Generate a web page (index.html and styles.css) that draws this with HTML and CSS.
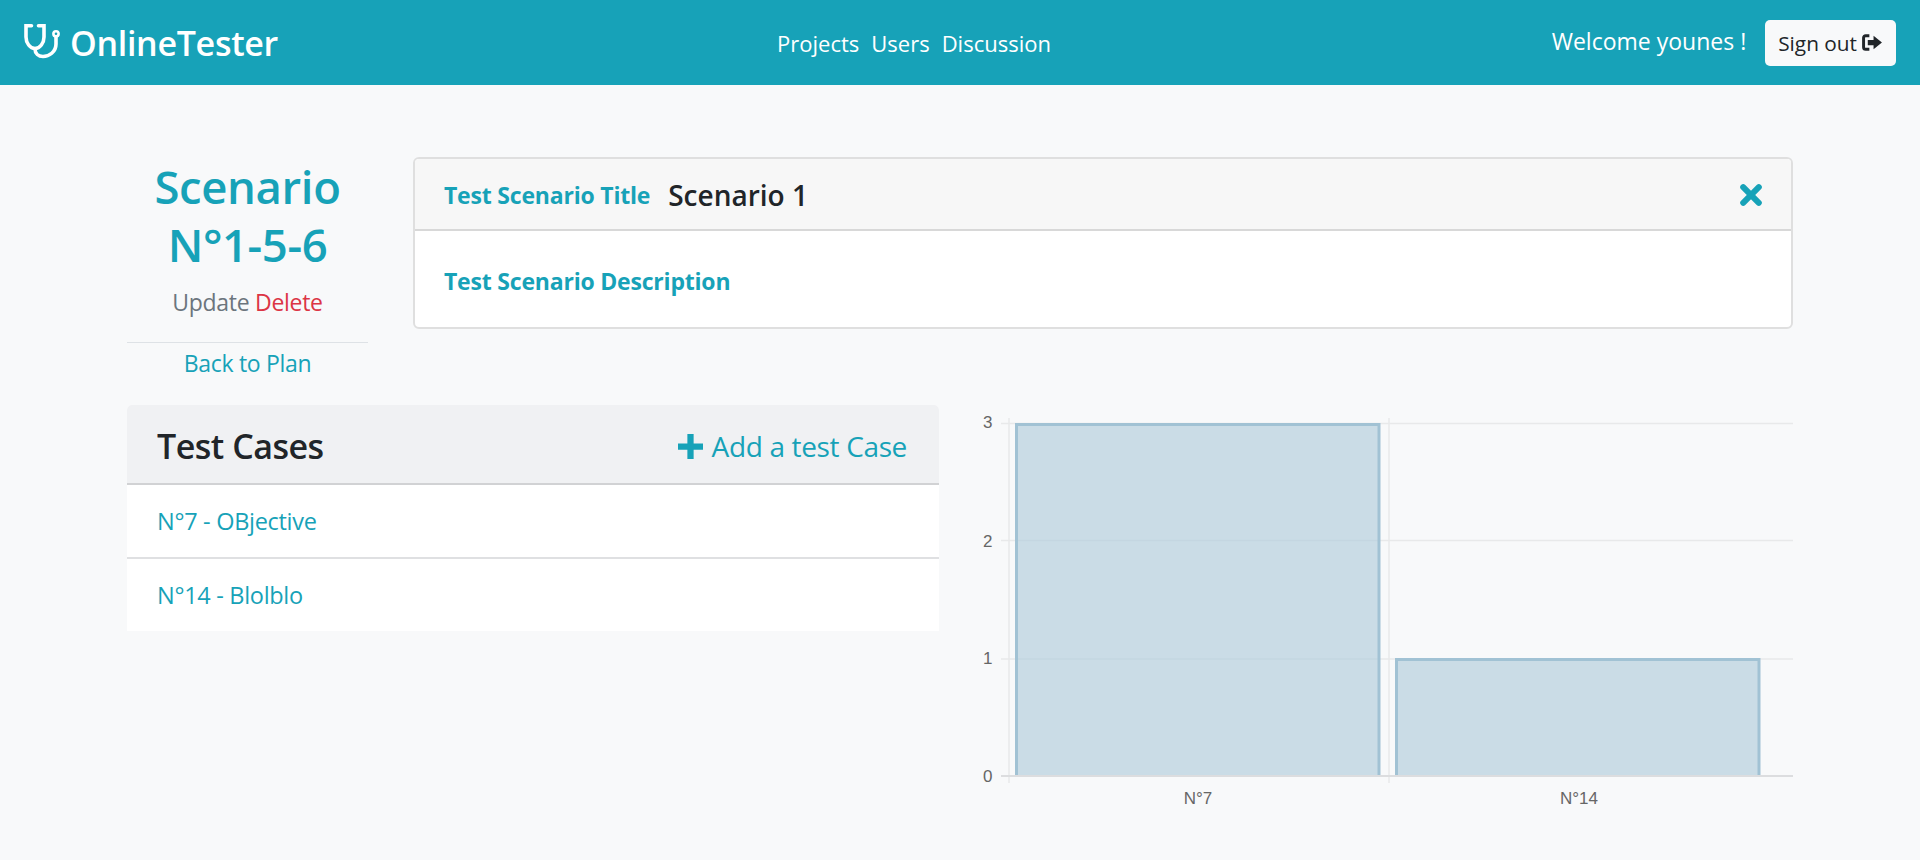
FILE: index.html
```html
<!DOCTYPE html>
<html lang="en">
<head>
    <meta charset="UTF-8">
    <title>OnlineTester</title>
    <link rel="stylesheet" href="styles.css">
</head>
<body>
    <header class="topbar">
        <a class="brand" href="#">
            <svg class="brand-icon" viewBox="0 0 38 38" fill="none" stroke="#fff" stroke-width="3.6" stroke-linecap="round">
                <path d="M7.5 1.8H2V13C2 19 6 24.5 11 24.5C16 24.5 20 19 20 13V1.8H14.5"/>
                <path d="M11 24.5V25C11 29.5 14.5 32.5 19 32.5C25 32.5 32 28 32 20V13.5"/>
                <circle cx="32" cy="9.8" r="2.6" stroke-width="2.6"/>
            </svg>
            OnlineTester
        </a>
        <nav class="nav-links">
            <a href="#">Projects</a>
            <a href="#">Users</a>
            <a href="#">Discussion</a>
        </nav>
        <div class="user-box">
            <span class="welcome">Welcome younes !</span>
            <button class="sign-out">Sign out
                <svg class="sign-icon" viewBox="0 0 20 16">
                    <path d="M7 1.5H3.5C2.3 1.5 1.5 2.3 1.5 3.5V12.5C1.5 13.7 2.3 14.5 3.5 14.5H7" fill="none" stroke="#212529" stroke-width="2.8"/>
                    <path d="M5.5 5.5H11V1.5L19 8L11 14.5V10.5H5.5Z" fill="#212529"/>
                </svg>
            </button>
        </div>
    </header>

    <main class="page">
        <section class="top-row">
            <div class="scenario-side">
                <h1>Scenario N°1-5-6</h1>
                <p class="actions"><a class="update" href="#">Update</a> <a class="delete" href="#">Delete</a></p>
                <a class="back" href="#">Back to Plan</a>
            </div>
            <div class="scenario-card">
                <div class="card-head">
                    <span class="card-label">Test Scenario Title</span>
                    <span class="card-title">Scenario 1</span>
                    <svg class="close-icon" viewBox="0 0 20 20" stroke="#17a2b8" stroke-width="5" stroke-linecap="round">
                        <path d="M3.5 3.5L16.5 16.5M16.5 3.5L3.5 16.5"/>
                    </svg>
                </div>
                <div class="card-body">
                    <span class="card-label">Test Scenario Description</span>
                </div>
            </div>
        </section>

        <section class="bottom-row">
            <div class="cases">
                <div class="cases-head">
                    <h2>Test Cases</h2>
                    <a class="add-case" href="#">
                        <svg class="plus-icon" viewBox="0 0 16 16" fill="#17a2b8">
                            <path d="M6 0H10V6H16V10H10V16H6V10H0V6H6Z"/>
                        </svg>
                        Add a test Case
                    </a>
                </div>
                <a class="case-row" href="#">N°7 - OBjective</a>
                <a class="case-row" href="#">N°14 - Blolblo</a>
            </div>
            <svg class="chart" viewBox="0 0 834 410">
                <!-- grid -->
                <g stroke="#e8e9ea" stroke-width="1.5">
                    <path d="M42 18.5H834M42 135.5H834M42 254H834"/>
                    <path d="M50 13V378M430 13V378"/>
                </g>
                <path d="M42 371H834" stroke="#dcdddf" stroke-width="2"/>
                <g fill="#b0cddb" fill-opacity="0.65" stroke="#a1c2d4" stroke-width="3">
                    <path d="M57.5 370V19.5H420V370"/>
                    <path d="M437.5 370V254.5H800V370"/>
                </g>
                <g class="chart-text" text-anchor="end">
                    <text x="33.5" y="23">3</text>
                    <text x="33.5" y="142">2</text>
                    <text x="33.5" y="259">1</text>
                    <text x="33.5" y="377">0</text>
                </g>
                <g class="chart-text" text-anchor="middle">
                    <text x="239" y="399">N°7</text>
                    <text x="620" y="399">N°14</text>
                </g>
            </svg>
        </section>
    </main>
</body>
</html>
```

FILE: styles.css
```css
* {
    box-sizing: border-box;
}

body {
    margin: 0;
    background: #f8f9fa;
    color: #212529;
    font-family: 'Open Sans', 'Noto Sans', sans-serif;
    font-size: 19px;
}

a {
    color: #17a2b8;
    text-decoration: none;
}

.topbar {
    display: grid;
    grid-template-columns: 1fr auto 1fr;
    align-items: center;
    height: 85px;
    padding: 0 24px;
    background: #17a2b8;
}

.brand {
    display: flex;
    align-items: center;
    gap: 8px;
    color: #fff;
    font-size: 34px;
    font-weight: 600;
    letter-spacing: -0.3px;
}

.brand-icon {
    width: 38px;
    height: 38px;
}

.nav-links {
    display: flex;
    gap: 12px;
    margin-right: 92px;
}

.nav-links a {
    color: #fff;
    font-size: 22px;
}

.user-box {
    display: flex;
    align-items: center;
    justify-content: flex-end;
    gap: 19px;
}

.welcome {
    color: #fff;
    font-size: 23px;
    margin-bottom: 4px;
}

.sign-out {
    display: flex;
    align-items: center;
    gap: 5px;
    height: 46px;
    padding: 0 13px;
    border: none;
    border-radius: 5px;
    background: #f8f9fa;
    color: #212529;
    font-family: inherit;
    font-size: 20.8px;
}

.sign-icon {
    width: 21px;
    height: 17px;
}

.page {
    padding: 72px 127px 0;
}

.top-row {
    display: flex;
    gap: 45px;
}

.scenario-side {
    flex: 0 0 241px;
    text-align: center;
}

.scenario-side h1 {
    margin: 0;
    color: #17a2b8;
    font-size: 45.5px;
    font-weight: 600;
    line-height: 58px;
    letter-spacing: -0.4px;
}

.actions {
    margin: 13px 0 0;
    padding-bottom: 24px;
    border-bottom: 1px solid #dee2e6;
    font-size: 23px;
    letter-spacing: -0.3px;
}

.update {
    color: #6c757d;
}

.delete {
    color: #dc3545;
}

.back {
    display: block;
    margin-top: 4px;
    font-size: 23px;
    letter-spacing: -0.3px;
}

.scenario-card {
    flex: 1;
    align-self: flex-start;
    height: 172px;
    border: 2px solid #dfdfdf;
    border-radius: 6px;
    background: #fff;
}

.card-head {
    display: flex;
    align-items: center;
    gap: 18px;
    height: 72px;
    padding: 2px 28px 0 29px;
    border-bottom: 2px solid #d8d8d8;
    border-radius: 4px 4px 0 0;
    background: #f7f7f7;
}

.card-label {
    color: #17a2b8;
    font-size: 23px;
    font-weight: 700;
    letter-spacing: -0.2px;
}

.card-title {
    font-size: 28px;
    font-weight: 600;
}

.close-icon {
    width: 24px;
    height: 24px;
    margin-left: auto;
}

.card-body {
    padding: 34px 29px;
}

.bottom-row {
    display: flex;
    gap: 20px;
    margin-top: 26px;
}

.cases {
    flex: 0 0 812px;
    align-self: flex-start;
    border-radius: 5px 5px 0 0;
    background: #fff;
}

.cases-head {
    display: flex;
    align-items: center;
    justify-content: space-between;
    height: 80px;
    padding: 4px 32px 0 30px;
    border-bottom: 2px solid #d1d2d4;
    border-radius: 5px 5px 0 0;
    background: #f0f1f3;
}

.cases-head h2 {
    margin: 0;
    font-size: 34px;
    font-weight: 600;
    letter-spacing: -0.5px;
}

.add-case {
    display: flex;
    align-items: center;
    gap: 9px;
    font-size: 28px;
    letter-spacing: -0.35px;
}

.plus-icon {
    width: 25px;
    height: 25px;
}

.case-row {
    display: block;
    height: 72px;
    padding: 0 30px;
    font-size: 23.5px;
    line-height: 72px;
    letter-spacing: -0.3px;
}

.case-row + .case-row {
    height: 74px;
    border-top: 2px solid #dfe0e2;
}

.chart {
    flex: 0 0 834px;
    width: 834px;
    height: 410px;
    overflow: visible;
}

.chart-text text {
    fill: #666;
    font-family: 'Liberation Sans', Arial, sans-serif;
    font-size: 17px;
}
```
